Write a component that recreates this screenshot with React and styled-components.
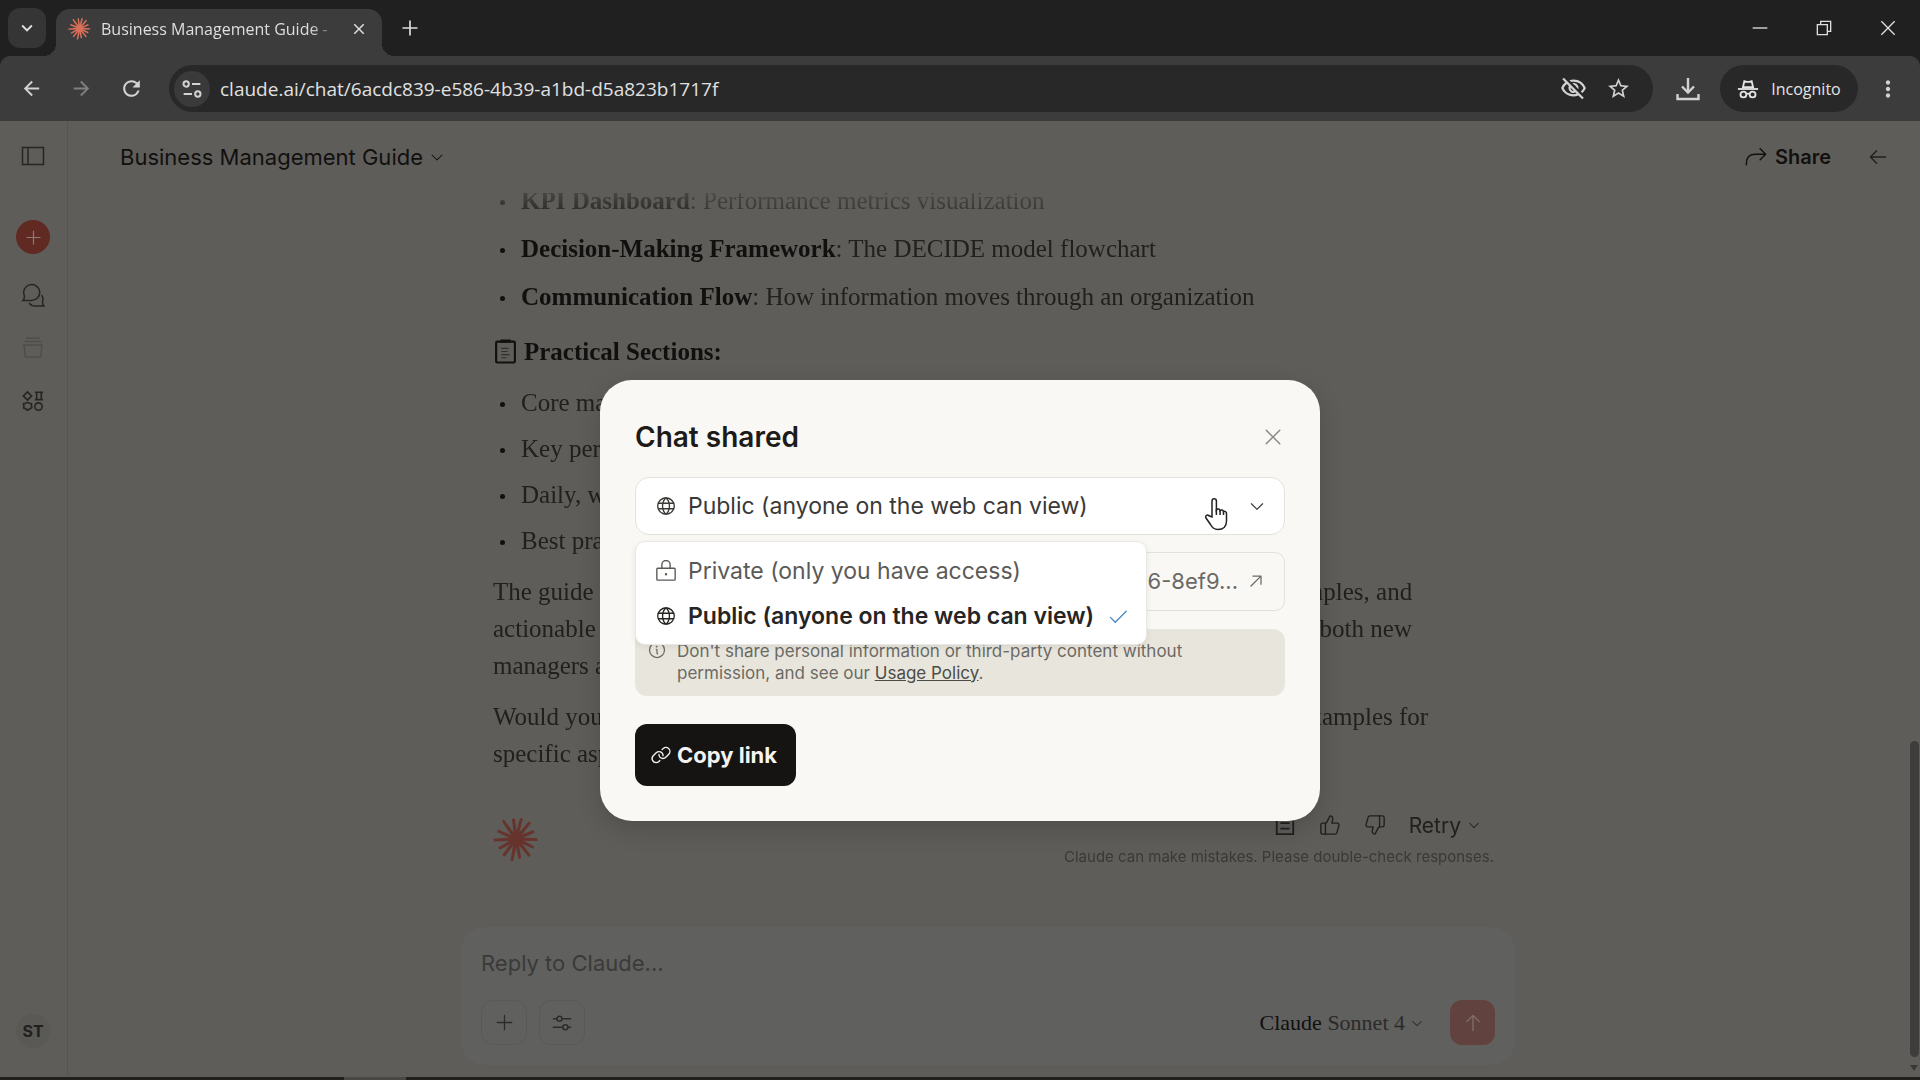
import React from 'react';
import styled, { createGlobalStyle } from 'styled-components';
import {
  PiArrowLeft,
  PiArrowUp,
  PiArrowUpRight,
  PiCaretDown,
  PiCheck,
  PiGlobe,
  PiInfo,
  PiLink,
  PiPlus,
  PiX,
} from 'react-icons/pi';
import {
  MdArrowBack,
  MdArrowForward,
  MdClose,
  MdExpandMore,
  MdMoreVert,
  MdOutlineVisibilityOff,
  MdRefresh,
  MdStarBorder,
} from 'react-icons/md';
import { ThumbsDown, ThumbsUp } from 'lucide-react';

const GlobalStyle = createGlobalStyle`
  :root {
    --strip: #202020;
    --toolbar: #3c3c3c;
    --field: #282828;
    --chromeTxt: #dedede;
    --page: #5f5d5a;
    --ink: #11100f;
    --inkSoft: #20201e;
    --muted: #3a3937;
    --modal: #f9f8f5;
    --sans: Inter, 'Liberation Sans', sans-serif;
    --serif: 'Liberation Serif', serif;
    --chrome: 'Open Sans', 'Noto Sans', sans-serif;
  }
  *, *::before, *::after {
    box-sizing: border-box;
  }
  body {
    margin: 0;
  }
  p, h1, h2, h3, ul {
    margin: 0;
    padding: 0;
  }
  button, input, select, textarea {
    font: inherit;
    color: inherit;
    background: none;
    border: 0;
    padding: 0;
    margin: 0;
    outline: none;
  }
  svg {
    display: block;
    flex-shrink: 0;
  }
`;

const Window = styled.div`
  display: flex;
  flex-direction: column;
  height: 100vh;
  overflow: hidden;
  background: var(--strip);
  font-family: var(--sans);
`;

/* browser chrome */

const TabStrip = styled.div`
  display: flex;
  align-items: center;
  height: 56px;
  padding-left: 8px;
  color: var(--chromeTxt);
  font-family: var(--chrome);
`;

const TabSearch = styled.button`
  display: grid;
  place-items: center;
  width: 38px;
  height: 40px;
  border-radius: 12px;
  background: #353535;
`;

const Tab = styled.div`
  position: relative;
  display: flex;
  align-items: center;
  align-self: flex-end;
  width: 326px;
  height: 47px;
  margin-left: 10px;
  padding: 0 12px 8px;
  gap: 10px;
  border-radius: 14px 14px 0 0;
  background: var(--toolbar);

  &::before,
  &::after {
    content: '';
    position: absolute;
    bottom: 0;
    width: 12px;
    height: 12px;
  }
  &::before {
    right: 100%;
    background: radial-gradient(circle at 0 0, transparent 12px, var(--toolbar) 12px);
  }
  &::after {
    left: 100%;
    background: radial-gradient(circle at 100% 0, transparent 12px, var(--toolbar) 12px);
  }
`;

const TabTitle = styled.span`
  flex: 1;
  overflow: hidden;
  white-space: nowrap;
  font-size: 16px;
  mask-image: linear-gradient(90deg, #000 88%, transparent);
`;

const ChromeButton = styled.button`
  display: grid;
  place-items: center;
  width: ${({ $width }) => $width || 24}px;
  height: 38px;
  opacity: ${({ $dim }) => ($dim ? 0.45 : 1)};
`;

const WindowButtons = styled.div`
  display: flex;
  margin-left: auto;
`;

const Toolbar = styled.div`
  display: flex;
  align-items: center;
  height: 65px;
  padding: 0 14px 0 6px;
  border-radius: 10px 10px 0 0;
  background: var(--toolbar);
  color: #d2d2d2;
  font-family: var(--chrome);
`;

const AddressBar = styled.div`
  display: flex;
  flex: 1;
  align-items: center;
  height: 47px;
  margin: 0 12px;
  padding: 0 12px 0 5px;
  border-radius: 24px;
  background: var(--field);
`;

const SiteInfo = styled.button`
  display: grid;
  place-items: center;
  width: 36px;
  height: 36px;
  margin-right: 10px;
  border-radius: 50%;
  background: #3a3a3a;
`;

const AddressInput = styled.input`
  flex: 1;
  min-width: 0;
  font-size: 19px;
  color: #e0e0e0;
`;

const Incognito = styled.button`
  display: flex;
  align-items: center;
  justify-content: center;
  gap: 12px;
  width: 138px;
  height: 47px;
  margin: 0 12px 0 9px;
  border-radius: 24px;
  background: var(--field);
  color: #e4e4e4;
  font-size: 16px;
`;

const Taskbar = styled.div`
  height: 3px;
  padding-left: 344px;
  background: #221f1e;

  &::before {
    content: '';
    display: block;
    width: 62px;
    height: 3px;
    background: #4a4846;
  }
`;

/* page */

const Page = styled.div`
  position: relative;
  display: flex;
  flex: 1;
  min-height: 0;
  background: var(--page);
  color: var(--ink);
`;

const Sidebar = styled.nav`
  display: flex;
  flex-direction: column;
  align-items: center;
  gap: 29px;
  width: 68px;
  padding: 23px 1px 29px 0;
  border-right: 1px solid #575552;
  color: var(--inkSoft);
`;

const SideButton = styled.button`
  display: grid;
  place-items: center;
  width: 34px;
  height: 24px;
  opacity: ${({ $dim }) => ($dim ? 0.25 : 0.9)};
`;

const NewChat = styled.button`
  display: grid;
  place-items: center;
  width: 34px;
  height: 34px;
  margin-top: 23px;
  border-radius: 50%;
  background: #602a23;
  color: #8e7a73;
`;

const Avatar = styled.button`
  width: 34px;
  height: 34px;
  margin-top: auto;
  border-radius: 50%;
  background: #5b5956;
  font-size: 16px;
  font-weight: 700;
`;

const Main = styled.main`
  display: flex;
  flex: 1;
  flex-direction: column;
  min-width: 0;
`;

const Header = styled.header`
  display: flex;
  align-items: center;
  justify-content: space-between;
  height: 72px;
  padding: 0 19px 0 52px;
`;

const ChatTitle = styled.button`
  display: flex;
  align-items: center;
  gap: 6px;
  font-size: 22px;
`;

const HeaderActions = styled.div`
  display: flex;
  align-items: center;
  gap: 36px;
  color: var(--inkSoft);
`;

const ShareButton = styled.button`
  display: flex;
  align-items: center;
  gap: 8px;
  color: var(--ink);
  font-size: 20px;
  font-weight: 600;
`;

const Column = styled.div`
  display: flex;
  flex: 1;
  flex-direction: column;
  width: 100%;
  max-width: 1054px;
  min-height: 0;
  margin: 0 auto;
`;

const Messages = styled.article`
  display: flex;
  flex: 1;
  flex-direction: column;
  justify-content: flex-end;
  min-height: 0;
  overflow: hidden;
  padding: 0 21px 58px 32px;
  color: var(--inkSoft);
  font-family: var(--serif);
  font-size: 25px;
  line-height: 37px;
  mask-image: linear-gradient(rgba(0, 0, 0, 0.3), #000 40px);

  strong {
    color: var(--ink);
  }
  p {
    margin-top: 14px;
    white-space: nowrap;
  }
`;

const BulletList = styled.ul`
  display: flex;
  flex-direction: column;
  gap: ${({ $gap }) => $gap}px;
  list-style: none;

  li::before {
    content: '';
    display: inline-block;
    width: 5px;
    height: 5px;
    margin: 0 16px 4px 7px;
    border-radius: 50%;
    background: var(--ink);
  }
`;

const SectionTitle = styled.h3`
  display: flex;
  align-items: center;
  gap: 6px;
  margin: 18px 0 14px;
  color: var(--ink);
  font-size: 25px;
  line-height: 37px;
`;

const MessageFooter = styled.footer`
  display: flex;
  align-items: center;
  justify-content: space-between;
  margin-top: 37px;
  font-family: var(--sans);
`;

const Feedback = styled.div`
  display: flex;
  flex-direction: column;
  align-items: flex-end;
  gap: 4px;
`;

const FeedbackRow = styled.div`
  display: flex;
  align-items: center;
  gap: 23px;
  height: 32px;
  padding-right: 13px;

  button {
    display: flex;
    align-items: center;
    gap: 6px;
    font-size: 21px;
  }
`;

const Disclaimer = styled.small`
  color: var(--muted);
  font-size: 15px;
  line-height: 24px;
`;

const Composer = styled.form`
  display: flex;
  flex-direction: column;
  gap: 21px;
  margin-bottom: 12px;
  padding: 20px;
  border-radius: 24px;
  background: #60605f;
`;

const Reply = styled.textarea`
  height: 32px;
  resize: none;
  font-size: 22px;
  line-height: 32px;

  &::placeholder {
    color: #3b3a39;
    opacity: 1;
  }
`;

const ComposerRow = styled.div`
  display: flex;
  align-items: center;
  gap: 12px;
`;

const ToolButton = styled.button`
  display: grid;
  place-items: center;
  width: 46px;
  height: 45px;
  border: 1px solid #595958;
  border-radius: 12px;
  color: #2d2c2b;
`;

const ModelButton = styled.button`
  display: flex;
  align-items: center;
  gap: 5px;
  margin: 0 14px 0 auto;
  font-family: var(--serif);
  font-size: 22px;
  color: #2b2a29;

  b {
    color: var(--ink);
    font-weight: 400;
  }
`;

const SendButton = styled.button`
  display: grid;
  place-items: center;
  width: 45px;
  height: 45px;
  border-radius: 12px;
  background: #62423e;
  color: #7d6d6a;
`;

const Scrollbar = styled.div`
  display: flex;
  flex-direction: column;
  align-items: center;
  justify-content: flex-end;
  gap: 7px;
  width: 12px;
  padding: 72px 0 5px;
  color: #393836;
`;

const Thumb = styled.div`
  width: 9px;
  height: 36%;
  border-radius: 5px;
  background: #3e3d3b;
`;

/* share dialog */

const Overlay = styled.div`
  position: absolute;
  inset: 0;
  display: grid;
  place-items: center;
  padding-top: 2px;
`;

const Dialog = styled.section`
  display: flex;
  flex-direction: column;
  width: 720px;
  max-width: 90%;
  padding: 35px;
  border-radius: 32px;
  background: var(--modal);
  box-shadow: 0 8px 24px rgba(0, 0, 0, 0.16);
`;

const DialogHeader = styled.header`
  display: flex;
  align-items: center;
  justify-content: space-between;
  height: 44px;
  margin-bottom: 18px;
  color: #8a8986;

  h2 {
    color: #1c1b19;
    font-size: 28px;
    font-weight: 600;
  }
`;

const Visibility = styled.div`
  position: relative;
  display: flex;
  align-items: center;
  gap: 11px;
  height: 58px;
  padding: 0 18px 0 19px;
  border: 1px solid #e2e1dd;
  border-radius: 14px;
  background: #fff;
  color: #3a3937;

  select {
    flex: 1;
    appearance: none;
    font-size: 23px;
  }
`;

const Options = styled.ul`
  position: absolute;
  top: calc(100% + 7px);
  left: -1px;
  width: 512px;
  padding: 7px 0 5px;
  border: 1px solid #e9e8e5;
  border-radius: 10px;
  background: #fff;
  box-shadow: 0 2px 6px rgba(0, 0, 0, 0.08);
  list-style: none;
`;

const Option = styled.li`
  display: flex;
  align-items: center;
  gap: 11px;
  height: 45px;
  padding: 0 17px 0 19px;
  color: ${({ $selected }) => ($selected ? '#262523' : '#5b5a57')};
  font-size: 23px;
  font-weight: ${({ $selected }) => ($selected ? 600 : 400)};

  svg:last-child {
    margin-left: auto;
  }
`;

const Pointer = styled.svg`
  position: absolute;
  top: 19px;
  right: 56px;
`;

const ShareLink = styled.a`
  display: flex;
  align-items: center;
  justify-content: flex-end;
  gap: 8px;
  height: 59px;
  margin: 17px 0 18px;
  padding: 0 18px;
  overflow: hidden;
  border: 1px solid #e2e1dd;
  border-radius: 10px;
  color: #6a6966;
  font-size: 22px;
  text-decoration: none;
  white-space: nowrap;
`;

const Notice = styled.div`
  display: flex;
  gap: 10px;
  padding: 11px 12px 12px;
  border-radius: 12px;
  background: #e8e6dc;
  color: #6b6a65;
  font-size: 17px;
  line-height: 22px;

  a {
    color: #4c4b47;
  }
`;

const CopyButton = styled.button`
  display: flex;
  align-items: center;
  align-self: flex-start;
  gap: 5px;
  height: 62px;
  margin-top: 28px;
  padding: 0 19px 0 15px;
  border-radius: 12px;
  background: #151413;
  color: #f4f3f1;
  font-size: 22px;
  font-weight: 700;
`;

/* length and angle of each ray, in logo units */
const RAYS = [
  [46, 3], [42, 27], [47, 52], [43, 80], [48, 102], [45, 128],
  [42, 152], [48, 178], [43, 205], [49, 236], [44, 264], [46, 286],
  [47, 311], [42, 338],
];

const ClaudeLogo = ({ size, color }) => (
  <svg width={size} height={size} viewBox="-50 -50 100 100" aria-hidden="true">
    <circle r="13" fill={color} />
    {RAYS.map(([length, angle]) => (
      <path
        key={angle}
        d={`M0 -4 L${length} -4 L${length + 1} 2 L0 4 Z`}
        fill={color}
        transform={`rotate(${angle})`}
      />
    ))}
  </svg>
);

const Icon = ({ size = 24, width = 1.5, children }) => (
  <svg
    width={size}
    height={size}
    viewBox="0 0 24 24"
    fill="none"
    stroke="currentColor"
    strokeWidth={width}
    aria-hidden="true"
  >
    {children}
  </svg>
);

const LockIcon = () => (
  <Icon size={22}>
    <rect x="2" y="9" width="20" height="13" rx="1" />
    <path d="M7.500 9V5a4.500 4.500 0 0 1 9 0v4" />
    <circle cx="12" cy="15.500" r=".6" fill="currentColor" />
  </Icon>
);

const IncognitoIcon = () => (
  <Icon size={22} width={2}>
    <path d="M6.500 10 8 3.500l2.500 .8h3l2.500-.8L17.500 10Z" fill="none" />
    <path d="M1 12h22" />
    <circle cx="7" cy="18" r="3.200" />
    <circle cx="17" cy="18" r="3.200" />
    <path d="M10 17.500q2-1 4 0" />
  </Icon>
);

const ClipboardIcon = () => (
  <Icon size={25} width={2}>
    <rect x="3" y="2.500" width="18" height="20" rx="1" />
    <path d="M7 2h10" strokeWidth="3" />
    <path d="M8 9h7M8 12h6M8 15h8M8 18h5" strokeWidth="1" opacity=".6" />
  </Icon>
);

const CHARTS = [
  { name: 'KPI Dashboard', text: 'Performance metrics visualization' },
  { name: 'Decision-Making Framework', text: 'The DECIDE model flowchart' },
  { name: 'Communication Flow', text: 'How information moves through an organization' },
];

const SECTIONS = [
  'Core management functions',
  'Key performance indicators',
  'Daily, weekly and monthly tasks',
  'Best practices',
];

const BrowserChrome = () => (
  <>
    <TabStrip>
      <TabSearch aria-label="Search tabs">
        <MdExpandMore size={22} />
      </TabSearch>
      <Tab>
        <ClaudeLogo size={23} color="#d9705a" />
        <TabTitle>Business Management Guide -</TabTitle>
        <ChromeButton aria-label="Close tab" $width={22}>
          <MdClose size={18} />
        </ChromeButton>
      </Tab>
      <ChromeButton aria-label="New tab" $width={56}>
        <Icon size={20} width={2}>
          <path d="M12 3v18M3 12h18" />
        </Icon>
      </ChromeButton>
      <WindowButtons>
        <ChromeButton aria-label="Minimize" $width={64}>
          <Icon size={16} width={2}>
            <path d="M1 12h22" />
          </Icon>
        </ChromeButton>
        <ChromeButton aria-label="Restore" $width={64}>
          <Icon size={16} width={2}>
            <path d="M2 7h15v15H2zM7 7V2h15v15h-5" />
          </Icon>
        </ChromeButton>
        <ChromeButton aria-label="Close" $width={64}>
          <Icon size={16} width={2}>
            <path d="m2 2 20 20M22 2 2 22" />
          </Icon>
        </ChromeButton>
      </WindowButtons>
    </TabStrip>
    <Toolbar>
      <ChromeButton aria-label="Back" $width={50}>
        <MdArrowBack size={23} />
      </ChromeButton>
      <ChromeButton aria-label="Forward" $width={50} $dim>
        <MdArrowForward size={23} />
      </ChromeButton>
      <ChromeButton aria-label="Reload" $width={51}>
        <MdRefresh size={25} />
      </ChromeButton>
      <AddressBar>
        <SiteInfo aria-label="Site information">
          <Icon size={20} width={2.400}>
            <circle cx="5" cy="6" r="3.200" />
            <path d="M12 6h10M2 18h10" />
            <circle cx="19" cy="18" r="3.200" />
          </Icon>
        </SiteInfo>
        <AddressInput
          aria-label="Address"
          readOnly
          value="claude.ai/chat/6acdc839-e586-4b39-a1bd-d5a823b1717f"
        />
        <ChromeButton aria-label="Third-party cookies blocked" $width={45}>
          <MdOutlineVisibilityOff size={27} />
        </ChromeButton>
        <ChromeButton aria-label="Bookmark" $width={45}>
          <MdStarBorder size={25} />
        </ChromeButton>
      </AddressBar>
      <ChromeButton aria-label="Downloads" $width={46}>
        <Icon size={24} width={2.400}>
          <path d="M12 1v14M6 9.500l6 6 6-6M1.500 17v5h21v-5" />
        </Icon>
      </ChromeButton>
      <Incognito>
        <IncognitoIcon />
        Incognito
      </Incognito>
      <ChromeButton aria-label="Menu" $width={36}>
        <MdMoreVert size={26} />
      </ChromeButton>
    </Toolbar>
  </>
);

const SideNav = () => (
  <Sidebar>
    <SideButton aria-label="Toggle sidebar">
      <Icon>
        <path d="M1.500 3.500h21v17h-21zM7 3.500v17" />
      </Icon>
    </SideButton>
    <NewChat aria-label="New chat">
      <PiPlus size={19} />
    </NewChat>
    <SideButton aria-label="Chats">
      <Icon>
        <path d="M2 17.500h8.500a8 8 0 1 0-7-4.500c0 2-.5 3.500-1.500 4.500Z" />
        <path d="M8 20c1.500 2 3.500 3 6 3h9c-1-1-1.500-2.500-1.500-4 .8-2.500 .5-5-1-7" />
      </Icon>
    </SideButton>
    <SideButton aria-label="Projects" $dim>
      <Icon>
        <path d="M5 2h14M3.500 5.500h17M3 9h18l-1.500 12h-15Z" />
      </Icon>
    </SideButton>
    <SideButton aria-label="Artifacts">
      <Icon size={22} width={1.800}>
        <path d="m6 2 4.500 4.500L6 11 1.500 6.500Z" />
        <path d="M14 2.500h9M14 10.500h9M16 2.500v8M21 2.500v8" />
        <path d="m6 13.500 2 1 2.300 .5v2.500L10.800 19l-2 1.500L6 22l-2-1.500-2.300-1 .3-2.500-.3-2L4 14.500Z" />
        <circle cx="18" cy="18" r="4" />
      </Icon>
    </SideButton>
    <Avatar>ST</Avatar>
  </Sidebar>
);

const Conversation = () => (
  <Messages>
    <BulletList $gap={11}>
      {CHARTS.map(({ name, text }) => (
        <li key={name}>
          <strong>{name}</strong>: {text}
        </li>
      ))}
    </BulletList>
    <SectionTitle>
      <ClipboardIcon />
      Practical Sections:
    </SectionTitle>
    <BulletList $gap={9}>
      {SECTIONS.map(section => (
        <li key={section}>{section}</li>
      ))}
    </BulletList>
    <p>
      The guide is designed to be comprehensive yet accessible, with clear visuals, examples, and
      <br />
      actionable advice that can be put to work straight away. It is equally well suited to both new
      <br />
      managers and experienced leaders.
    </p>
    <p>
      Would you like me to expand on any particular section, or also create additional examples for
      <br />
      specific aspects of management?
    </p>
    <MessageFooter>
      <ClaudeLogo size={46} color="#67342d" />
      <Feedback>
        <FeedbackRow>
          <button type="button" aria-label="Copy">
            <Icon size={22} width={2}>
              <path d="M3 3h18v19H3zM8 2h8M7 10h10M7 16h10" />
            </Icon>
          </button>
          <button type="button" aria-label="Good response">
            <ThumbsUp size={22} strokeWidth={1.500} />
          </button>
          <button type="button" aria-label="Bad response">
            <ThumbsDown size={22} strokeWidth={1.500} />
          </button>
          <button type="button">
            Retry <PiCaretDown size={14} />
          </button>
        </FeedbackRow>
        <Disclaimer>Claude can make mistakes. Please double-check responses.</Disclaimer>
      </Feedback>
    </MessageFooter>
  </Messages>
);

const ReplyBox = () => (
  <Composer>
    <Reply aria-label="Reply" placeholder="Reply to Claude..." />
    <ComposerRow>
      <ToolButton type="button" aria-label="Add content">
        <PiPlus size={21} />
      </ToolButton>
      <ToolButton type="button" aria-label="Tools">
        <Icon size={20} width={1.800}>
          <path d="M1 7h5M12 7h11M1 17h12M19 17h4" />
          <circle cx="9" cy="7" r="3" />
          <circle cx="16" cy="17" r="3" />
        </Icon>
      </ToolButton>
      <ModelButton type="button">
        <span>
          <b>Claude</b> Sonnet 4
        </span>
        <PiCaretDown size={14} />
      </ModelButton>
      <SendButton type="button" aria-label="Send">
        <PiArrowUp size={22} />
      </SendButton>
    </ComposerRow>
  </Composer>
);

const ShareDialog = () => (
  <Overlay>
    <Dialog role="dialog" aria-labelledby="share-title">
      <DialogHeader>
        <h2 id="share-title">Chat shared</h2>
        <button type="button" aria-label="Close dialog">
          <PiX size={24} />
        </button>
      </DialogHeader>
      <Visibility>
        <PiGlobe size={22} />
        <select aria-label="Visibility" defaultValue="public">
          <option value="private">Private (only you have access)</option>
          <option value="public">Public (anyone on the web can view)</option>
        </select>
        <PiCaretDown size={18} />
        <Pointer width="24" height="34" viewBox="0 0 24 34" aria-hidden="true">
          <path
            d="M8 20V4a2.200 2.200 0 0 1 4.400 0v9a2 2 0 0 1 3.700 .6 2 2 0 0 1 3.400 1 2 2 0 0 1 3 1.700V24c0 5-3 8.500-8.500 8.500-4 0-6-2-7.500-5L2 21c-1.200-2.500 1.500-4 3-2.200Z"
            fill="#fff"
            stroke="#222"
            strokeWidth="1.500"
          />
          <path d="M12.400 12v6M16.100 13.500V18M19.500 14.500V18" stroke="#222" strokeWidth="1.500" />
        </Pointer>
        <Options role="listbox" aria-label="Visibility options">
          <Option role="option" aria-selected="false">
            <LockIcon />
            <span>Private (only you have access)</span>
          </Option>
          <Option role="option" aria-selected="true" $selected>
            <PiGlobe size={22} />
            <span>Public (anyone on the web can view)</span>
            <PiCheck size={22} color="#4a8ac4" />
          </Option>
        </Options>
      </Visibility>
      <ShareLink href="#share">
        <span>6-8ef9...</span>
        <PiArrowUpRight size={20} />
      </ShareLink>
      <Notice>
        <PiInfo size={20} />
        <p>
          Don&apos;t share personal information or third-party content without permission, and see
          our <a href="#policy">Usage Policy</a>.
        </p>
      </Notice>
      <CopyButton type="button">
        <PiLink size={22} />
        Copy link
      </CopyButton>
    </Dialog>
  </Overlay>
);

const App = () => (
  <Window>
    <GlobalStyle />
    <BrowserChrome />
    <Page>
      <SideNav />
      <Main>
        <Header>
          <ChatTitle>
            Business Management Guide <PiCaretDown size={16} />
          </ChatTitle>
          <HeaderActions>
            <ShareButton>
              <Icon size={22}>
                <path d="M1.500 21v-2c0-6.500 4-10 10-10h10.500M16 2.500 22.500 9 16 15.500" />
              </Icon>
              Share
            </ShareButton>
            <button type="button" aria-label="Open panel">
              <PiArrowLeft size={22} />
            </button>
          </HeaderActions>
        </Header>
        <Column>
          <Conversation />
          <ReplyBox />
        </Column>
      </Main>
      <Scrollbar>
        <Thumb />
        <svg width="10" height="8" viewBox="0 0 10 8">
          <path d="M1 1h8L5 7Z" fill="currentColor" />
        </svg>
      </Scrollbar>
      <ShareDialog />
    </Page>
    <Taskbar />
  </Window>
);

export default App;
